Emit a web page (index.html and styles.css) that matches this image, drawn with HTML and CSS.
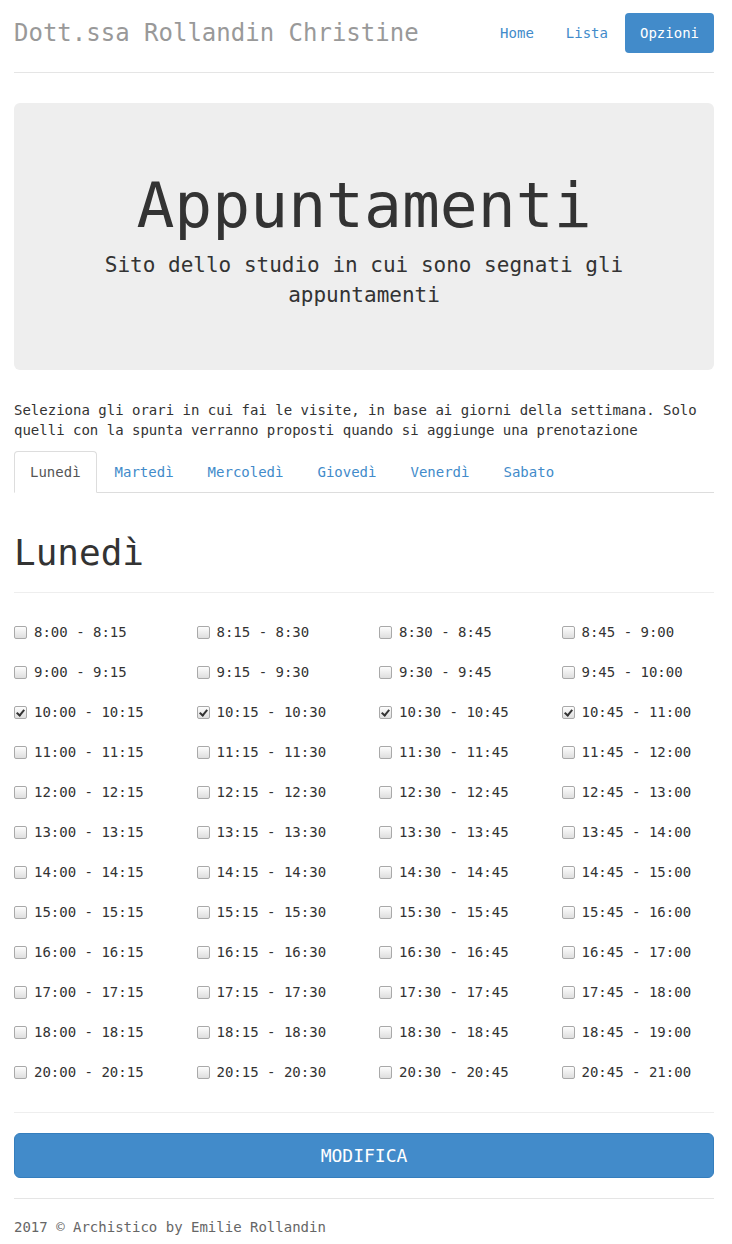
FILE: index.html
```html
<!DOCTYPE html>
<html lang="it">
<head>
<meta charset="utf-8">
<title>Appuntamenti</title>
<link rel="stylesheet" href="styles.css">
</head>
<body>
<div class="container">
  <header class="header">
    <h3 class="brand">Dott.ssa Rollandin Christine</h3>
    <nav class="pills">
      <a class="pill" href="#">Home</a>
      <a class="pill" href="#">Lista</a>
      <a class="pill active" href="#">Opzioni</a>
    </nav>
  </header>

  <section class="jumbotron">
    <h1 class="jumbo-title">Appuntamenti</h1>
    <p class="jumbo-lead">Sito dello studio in cui sono segnati gli appuntamenti</p>
  </section>

  <p class="intro">Seleziona gli orari in cui fai le visite, in base ai giorni della settimana. Solo quelli con la spunta verranno proposti quando si aggiunge una prenotazione</p>

  <ul class="tabs">
    <li class="tab active"><a href="#">Lunedì</a></li>
    <li class="tab"><a href="#">Martedì</a></li>
    <li class="tab"><a href="#">Mercoledì</a></li>
    <li class="tab"><a href="#">Giovedì</a></li>
    <li class="tab"><a href="#">Venerdì</a></li>
    <li class="tab"><a href="#">Sabato</a></li>
  </ul>

  <div class="page-header">
    <h1 class="day-title">Lunedì</h1>
  </div>

  <form class="slots-form">
    <div class="slots">
      <label class="slot"><input type="checkbox"><span>8:00 - 8:15</span></label>
      <label class="slot"><input type="checkbox"><span>8:15 - 8:30</span></label>
      <label class="slot"><input type="checkbox"><span>8:30 - 8:45</span></label>
      <label class="slot"><input type="checkbox"><span>8:45 - 9:00</span></label>
      <label class="slot"><input type="checkbox"><span>9:00 - 9:15</span></label>
      <label class="slot"><input type="checkbox"><span>9:15 - 9:30</span></label>
      <label class="slot"><input type="checkbox"><span>9:30 - 9:45</span></label>
      <label class="slot"><input type="checkbox"><span>9:45 - 10:00</span></label>
      <label class="slot"><input type="checkbox" checked><span>10:00 - 10:15</span></label>
      <label class="slot"><input type="checkbox" checked><span>10:15 - 10:30</span></label>
      <label class="slot"><input type="checkbox" checked><span>10:30 - 10:45</span></label>
      <label class="slot"><input type="checkbox" checked><span>10:45 - 11:00</span></label>
      <label class="slot"><input type="checkbox"><span>11:00 - 11:15</span></label>
      <label class="slot"><input type="checkbox"><span>11:15 - 11:30</span></label>
      <label class="slot"><input type="checkbox"><span>11:30 - 11:45</span></label>
      <label class="slot"><input type="checkbox"><span>11:45 - 12:00</span></label>
      <label class="slot"><input type="checkbox"><span>12:00 - 12:15</span></label>
      <label class="slot"><input type="checkbox"><span>12:15 - 12:30</span></label>
      <label class="slot"><input type="checkbox"><span>12:30 - 12:45</span></label>
      <label class="slot"><input type="checkbox"><span>12:45 - 13:00</span></label>
      <label class="slot"><input type="checkbox"><span>13:00 - 13:15</span></label>
      <label class="slot"><input type="checkbox"><span>13:15 - 13:30</span></label>
      <label class="slot"><input type="checkbox"><span>13:30 - 13:45</span></label>
      <label class="slot"><input type="checkbox"><span>13:45 - 14:00</span></label>
      <label class="slot"><input type="checkbox"><span>14:00 - 14:15</span></label>
      <label class="slot"><input type="checkbox"><span>14:15 - 14:30</span></label>
      <label class="slot"><input type="checkbox"><span>14:30 - 14:45</span></label>
      <label class="slot"><input type="checkbox"><span>14:45 - 15:00</span></label>
      <label class="slot"><input type="checkbox"><span>15:00 - 15:15</span></label>
      <label class="slot"><input type="checkbox"><span>15:15 - 15:30</span></label>
      <label class="slot"><input type="checkbox"><span>15:30 - 15:45</span></label>
      <label class="slot"><input type="checkbox"><span>15:45 - 16:00</span></label>
      <label class="slot"><input type="checkbox"><span>16:00 - 16:15</span></label>
      <label class="slot"><input type="checkbox"><span>16:15 - 16:30</span></label>
      <label class="slot"><input type="checkbox"><span>16:30 - 16:45</span></label>
      <label class="slot"><input type="checkbox"><span>16:45 - 17:00</span></label>
      <label class="slot"><input type="checkbox"><span>17:00 - 17:15</span></label>
      <label class="slot"><input type="checkbox"><span>17:15 - 17:30</span></label>
      <label class="slot"><input type="checkbox"><span>17:30 - 17:45</span></label>
      <label class="slot"><input type="checkbox"><span>17:45 - 18:00</span></label>
      <label class="slot"><input type="checkbox"><span>18:00 - 18:15</span></label>
      <label class="slot"><input type="checkbox"><span>18:15 - 18:30</span></label>
      <label class="slot"><input type="checkbox"><span>18:30 - 18:45</span></label>
      <label class="slot"><input type="checkbox"><span>18:45 - 19:00</span></label>
      <label class="slot"><input type="checkbox"><span>20:00 - 20:15</span></label>
      <label class="slot"><input type="checkbox"><span>20:15 - 20:30</span></label>
      <label class="slot"><input type="checkbox"><span>20:30 - 20:45</span></label>
      <label class="slot"><input type="checkbox"><span>20:45 - 21:00</span></label>
    </div>
    <hr class="rule">
    <button type="button" class="btn-submit">MODIFICA</button>
  </form>

  <footer class="footer">2017 © Archistico by Emilie Rollandin</footer>
</div>
</body>
</html>
```

FILE: styles.css
```css
* { box-sizing: border-box; }

html, body {
  margin: 0;
  padding: 0;
  background: #fff;
}

body {
  font-family: "DejaVu Sans Mono", "Liberation Mono", monospace;
  font-size: 14px;
  line-height: 20px;
  color: #333;
}

.container {
  width: 700px;
  margin-left: 14px;
}

a { text-decoration: none; color: #428bca; }

/* Header */
.header {
  display: flex;
  align-items: center;
  justify-content: space-between;
  padding-top: 13px;
  padding-bottom: 19px;
  border-bottom: 1px solid #e5e5e5;
}

.brand {
  margin: 0;
  font-size: 24px;
  line-height: 40px;
  font-weight: normal;
  color: #999;
}

.pills {
  display: flex;
  gap: 2px;
}

.pill {
  display: block;
  padding: 10px 15px;
  line-height: 20px;
  border-radius: 4px;
  color: #428bca;
}

.pill.active {
  background: #428bca;
  color: #fff;
}

/* Jumbotron */
.jumbotron {
  margin-top: 30px;
  margin-bottom: 30px;
  padding: 48px 60px;
  background: #eee;
  border-radius: 6px;
  text-align: center;
}

.jumbo-title {
  margin: 20px 0 10px;
  font-size: 63px;
  line-height: 69px;
  font-weight: normal;
  color: #333;
}

.jumbo-lead {
  margin: 0 0 12px;
  font-size: 21px;
  line-height: 30px;
  color: #333;
}

/* Intro */
.intro {
  margin: 0 0 11px;
}

/* Tabs */
.tabs {
  display: flex;
  list-style: none;
  margin: 0;
  padding: 0;
  border-bottom: 1px solid #ddd;
}

.tab {
  margin-bottom: -1px;
  margin-right: 2px;
}

.tab a {
  display: block;
  padding: 10px 15px;
  line-height: 20px;
  border: 1px solid transparent;
  border-radius: 4px 4px 0 0;
  color: #428bca;
}

.tab.active a {
  color: #555;
  background: #fff;
  border-color: #ddd #ddd transparent #ddd;
}

/* Day header */
.page-header {
  margin: 40px 0 19px;
  padding-bottom: 9px;
  border-bottom: 1px solid #eee;
}

.day-title {
  margin: 0 0 10px;
  font-size: 36px;
  line-height: 40px;
  font-weight: normal;
  color: #333;
}

/* Slots */
.slots {
  display: grid;
  grid-template-columns: repeat(4, 1fr);
  column-gap: 30px;
}

.slot {
  display: flex;
  align-items: center;
  height: 40px;
  color: #333;
}

.slot input {
  -webkit-appearance: none;
  appearance: none;
  position: relative;
  width: 13px;
  height: 13px;
  margin: 0 7px 0 0;
  border: 1px solid #a9a9a9;
  border-radius: 2px;
  background: linear-gradient(#fdfdfd, #dedede);
  flex: none;
}

.slot input:checked::after {
  content: "";
  position: absolute;
  left: 3px;
  top: 1px;
  width: 3px;
  height: 6px;
  border: solid #333;
  border-width: 0 2px 2px 0;
  transform: rotate(40deg);
}

.rule {
  margin: 20px 0;
  border: 0;
  border-top: 1px solid #eee;
}

.btn-submit {
  display: block;
  width: 100%;
  height: 45px;
  padding: 0;
  font-family: inherit;
  font-size: 18px;
  color: #fff;
  background: #428bca;
  border: 1px solid #357ebd;
  border-radius: 6px;
  cursor: pointer;
}

/* Footer */
.footer {
  margin-top: 20px;
  padding-top: 18px;
  border-top: 1px solid #e5e5e5;
  color: #666;
}
```
